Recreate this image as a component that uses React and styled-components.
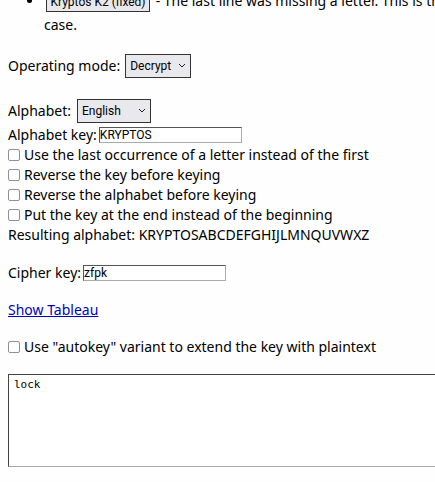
import React, { useId, useState } from "react";
import styled, { createGlobalStyle } from "styled-components";

const GlobalStyle = createGlobalStyle`
  * { box-sizing: border-box; }
  body {
    margin: 0;
    background: #fefefe;
    color: #000;
    font: 14px/20px "Noto Sans", sans-serif;
    overflow: hidden;
  }
`;

const controlFont = `font-family: "Roboto", "Liberation Sans", sans-serif; font-size: 12px; color: #000;`;

const Page = styled.main`
  padding-left: 8px;
  overflow: hidden;
`;

const Examples = styled.ul`
  margin: -11px 0 17px;
  padding-left: 36px;
  line-height: 24px;
  white-space: nowrap;
`;

const ExampleButton = styled.button`
  ${controlFont}
  height: 20px;
  width: 104px;
  margin: 0 2px;
  padding: 0;
  line-height: 16px;
  border: 1px solid #333;
  border-radius: 0;
  background: #e9e9ed;
  vertical-align: middle;
`;

const Row = styled.div`
  display: flex;
  align-items: center;
  min-height: 20px;
  gap: ${(p) => p.$gap || 2}px;
  margin-bottom: ${(p) => p.$after || 0}px;
  white-space: nowrap;
`;

const SelectFrame = styled.span`
  display: grid;
  align-items: center;
  width: ${(p) => p.$width}px;

  > * { grid-area: 1 / 1; }

  > svg {
    justify-self: end;
    margin-right: 5px;
    pointer-events: none;
  }
`;

const SelectBox = styled.select`
  ${controlFont}
  appearance: none;
  width: 100%;
  height: 24px;
  padding: 0 4px;
  border: 1px solid #333;
  border-radius: 0;
  background: #e9e9ed;
`;

const TextInput = styled.input`
  ${controlFont}
  width: 143px;
  height: 16px;
  padding: 0;
  border: 1px solid;
  border-color: #555 #aaa #aaa #555;
  border-radius: 0;
  background: #fff;
`;

const Tick = styled.input`
  appearance: none;
  flex: none;
  width: 12px;
  height: 12px;
  margin: 0 2px 0 0;
  border: 1px solid #8f8f9d;
  border-radius: 2px;
  background: #fff;

  &:checked { background: #0060df; }
`;

const TableauLink = styled.a`
  color: #0000b8;
  text-decoration: underline;
`;

const Message = styled.textarea`
  display: block;
  width: 100%;
  height: 93px;
  padding: 2px 5px;
  border: 1px solid;
  border-color: #444 #aaa #aaa #444;
  border-right: 0;
  border-radius: 0;
  background: #fff;
  color: #000;
  font: 11px/16px "DejaVu Sans Mono", monospace;
  resize: none;
`;

function Choice({ label, value, width, gap, after, options }) {
  const id = useId();
  return (
    <Row $gap={gap} $after={after}>
      <label htmlFor={id}>{label}</label>
      <SelectFrame $width={width}>
        <SelectBox id={id} defaultValue={value}>
          {options.map((o) => <option key={o}>{o}</option>)}
        </SelectBox>
        <svg width="8" height="6" viewBox="0 0 8 6" fill="none" stroke="#222" aria-hidden="true">
          <path d="M1 1l3 3 3-3" />
        </svg>
      </SelectFrame>
    </Row>
  );
}

function KeyField({ label, value, onChange, after }) {
  const id = useId();
  return (
    <Row $after={after}>
      <label htmlFor={id}>{label}</label>
      <TextInput id={id} value={value} onChange={(e) => onChange(e.target.value)} />
    </Row>
  );
}

function Option({ label, after }) {
  const id = useId();
  return (
    <Row $after={after}>
      <Tick id={id} type="checkbox" />
      <label htmlFor={id}>{label}</label>
    </Row>
  );
}

const LETTERS = "ABCDEFGHIJKLMNOPQRSTUVWXYZ";
const keyedAlphabet = (key) =>
  [...new Set(key.toUpperCase().replace(/[^A-Z]/g, "") + LETTERS)].join("");

export default function App() {
  const [alphabetKey, setAlphabetKey] = useState("KRYPTOS");
  const [cipherKey, setCipherKey] = useState("zfpk");
  return (
    <Page>
      <GlobalStyle />
      <Examples>
        <li>
          <ExampleButton type="button">Kryptos K2 (fixed)</ExampleButton> - The last line was missing a letter. This is the
          <br />
          case.
        </li>
      </Examples>
      <Choice label="Operating mode:" value="Decrypt" width={66} gap={5} after={21} options={["Encrypt", "Decrypt"]} />
      <Choice label="Alphabet:" value="English" width={74} gap={6} after={2} options={["English", "German", "Spanish"]} />
      <KeyField label="Alphabet key:" value={alphabetKey} onChange={setAlphabetKey} />
      <Option label="Use the last occurrence of a letter instead of the first" />
      <Option label="Reverse the key before keying" />
      <Option label="Reverse the alphabet before keying" />
      <Option label="Put the key at the end instead of the beginning" />
      <Row $after={18}>Resulting alphabet: {keyedAlphabet(alphabetKey)}</Row>
      <KeyField label="Cipher key:" value={cipherKey} onChange={setCipherKey} after={17} />
      <Row $after={17}>
        <TableauLink href="#tableau">Show Tableau</TableauLink>
      </Row>
      <Option label={'Use "autokey" variant to extend the key with plaintext'} after={17} />
      <Message aria-label="Message" defaultValue="lock" />
    </Page>
  );
}
